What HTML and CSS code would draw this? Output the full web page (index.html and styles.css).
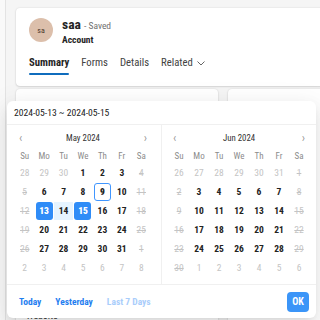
FILE: index.html
```html
<!DOCTYPE html>
<html lang="en">
<head>
  <meta charset="UTF-8">
  <meta name="viewport" content="width=device-width, initial-scale=1.0">
  <title>Account - saa</title>
  <link rel="stylesheet" href="styles.css">
</head>
<body>
  <div class="shell">
    <div class="rail"></div>
    <div class="main">
      <div class="header card">
        <div class="identity">
          <div class="avatar">sa</div>
          <div class="names">
            <div class="title">saa <span class="saved">- Saved</span></div>
            <div class="entity">Account</div>
          </div>
        </div>
        <div class="tabs">
          <span class="tab active">Summary</span>
          <span class="tab">Forms</span>
          <span class="tab">Details</span>
          <span class="tab">Related
            <svg class="chev" width="8" height="5" viewBox="0 0 8 5"><path d="M0.5 0.5l3.5 3.5 3.5-3.5" fill="none" stroke="#666" stroke-width="1"/></svg>
          </span>
        </div>
      </div>

      <div class="sections">
        <div class="card section">
          <div class="field">Website</div>
        </div>
        <div class="card section"></div>
      </div>
    </div>
  </div>

  <!-- date range popup -->
  <div class="picker">
    <div class="range-input">2024-05-13 ~ 2024-05-15</div>

    <div class="panels">
      <div class="panel">
        <div class="panel-head">
          <span class="arrow">&lsaquo;</span>
          <span class="month">May 2024</span>
          <span class="arrow">&rsaquo;</span>
        </div>
        <div class="grid">
          <span class="wd">Su</span><span class="wd">Mo</span><span class="wd">Tu</span><span class="wd">We</span><span class="wd">Th</span><span class="wd">Fr</span><span class="wd">Sa</span>

          <span class="d off">28</span><span class="d off">29</span><span class="d off">30</span><span class="d">1</span><span class="d">2</span><span class="d">3</span><span class="d dis">4</span>
          <span class="d dis">5</span><span class="d">6</span><span class="d">7</span><span class="d">8</span><span class="d"><b class="today">9</b></span><span class="d">10</span><span class="d dis">11</span>
          <span class="d dis">12</span><span class="d"><b class="sel">13</b></span><span class="d in">14</span><span class="d"><b class="sel">15</b></span><span class="d">16</span><span class="d">17</span><span class="d dis">18</span>
          <span class="d dis">19</span><span class="d">20</span><span class="d">21</span><span class="d">22</span><span class="d">23</span><span class="d">24</span><span class="d dis">25</span>
          <span class="d dis">26</span><span class="d">27</span><span class="d">28</span><span class="d">29</span><span class="d">30</span><span class="d">31</span><span class="d dis">1</span>
          <span class="d off">2</span><span class="d off">3</span><span class="d off">4</span><span class="d off">5</span><span class="d off">6</span><span class="d off">7</span><span class="d off">8</span>
        </div>
      </div>

      <div class="panel">
        <div class="panel-head">
          <span class="arrow">&lsaquo;</span>
          <span class="month">Jun 2024</span>
          <span class="arrow">&rsaquo;</span>
        </div>
        <div class="grid">
          <span class="wd">Su</span><span class="wd">Mo</span><span class="wd">Tu</span><span class="wd">We</span><span class="wd">Th</span><span class="wd">Fr</span><span class="wd">Sa</span>

          <span class="d off">26</span><span class="d off">27</span><span class="d off">28</span><span class="d off">29</span><span class="d off">30</span><span class="d off">31</span><span class="d dis">1</span>
          <span class="d dis">2</span><span class="d">3</span><span class="d">4</span><span class="d">5</span><span class="d">6</span><span class="d">7</span><span class="d dis">8</span>
          <span class="d dis">9</span><span class="d">10</span><span class="d">11</span><span class="d">12</span><span class="d">13</span><span class="d">14</span><span class="d dis">15</span>
          <span class="d dis">16</span><span class="d">17</span><span class="d">18</span><span class="d">19</span><span class="d">20</span><span class="d">21</span><span class="d dis">22</span>
          <span class="d dis">23</span><span class="d">24</span><span class="d">25</span><span class="d">26</span><span class="d">27</span><span class="d">28</span><span class="d dis">29</span>
          <span class="d dis">30</span><span class="d off">1</span><span class="d off">2</span><span class="d off">3</span><span class="d off">4</span><span class="d off">5</span><span class="d off">6</span>
        </div>
      </div>
    </div>

    <div class="footer">
      <span class="preset">Today</span>
      <span class="preset">Yesterday</span>
      <span class="preset muted">Last 7 Days</span>
      <button class="ok">OK</button>
    </div>
  </div>
</body>
</html>
```

FILE: styles.css
```css
* {
  box-sizing: border-box;
}
body {
  margin: 0;
  width: 320px;
  height: 320px;
  overflow: hidden;
  background-color: #f5f5f5;
  font-family: "Liberation Sans Narrow", "Roboto Condensed", "Noto Sans", sans-serif;
  color: #242424;
}
.shell {
  display: flex;
  height: 320px;
}
.rail {
  width: 6px;
  flex: none;
  background-color: #f9f9f9;
  border-right: 1px solid #e3e3e3;
}
.main {
  flex: 1;
  padding: 8px 0 0 10px;
  min-width: 0;
}
.card {
  background-color: #fff;
  border-radius: 4px;
  box-shadow: 0 0 2px rgba(0, 0, 0, 0.12), 0 1px 2px rgba(0, 0, 0, 0.1);
}
.header {
  height: 78px;
  margin-right: -10px;
  padding: 10px 0 0 13px;
}
.identity {
  display: flex;
  align-items: flex-start;
  gap: 9px;
}
.avatar {
  width: 24px;
  height: 24px;
  border-radius: 50%;
  background-color: #dcbfab;
  color: #4b372b;
  font-size: 8px;
  display: flex;
  align-items: center;
  justify-content: center;
}
.names {
  margin-top: -1px;
}
.title {
  font-size: 13.5px;
  line-height: 15px;
  font-weight: 700;
}
.saved {
  font-size: 9.5px;
  font-weight: 400;
  color: #707070;
}
.entity {
  font-size: 9.5px;
  line-height: 14px;
  font-weight: 700;
}
.tabs {
  display: flex;
  gap: 12px;
  margin-top: 9px;
  font-size: 10.7px;
  line-height: 14px;
  color: #424242;
}
.tab {
  position: relative;
  padding-bottom: 5px;
}
.tab.active {
  color: #242424;
  font-weight: 700;
}
.tab.active::after {
  content: "";
  position: absolute;
  left: 0;
  right: 0;
  bottom: 0;
  height: 2px;
  border-radius: 1px;
  background-color: #0f6cbd;
}
.chev {
  margin-left: 2px;
  vertical-align: middle;
}
.sections {
  display: flex;
  gap: 10px;
  margin-top: 3px;
}
.section {
  height: 240px;
  width: 202px;
  flex: none;
  padding: 221px 0 0 10px;
}
.field {
  font-size: 10px;
  color: #424242;
}

/* range picker popup */
.picker {
  position: absolute;
  left: 7px;
  top: 101px;
  width: 309px;
  height: 217px;
  background-color: #fff;
  border-radius: 6px;
  box-shadow: 0 6px 16px rgba(0, 0, 0, 0.08), 0 3px 6px -4px rgba(0, 0, 0, 0.12), 0 9px 28px 8px rgba(0, 0, 0, 0.05);
  display: flex;
  flex-direction: column;
}
.range-input {
  height: 24px;
  padding-left: 7px;
  font-size: 9.6px;
  line-height: 24px;
  color: #222;
  border-bottom: 1px solid #f0f0f0;
}
.panels {
  display: flex;
  border-bottom: 1px solid #f0f0f0;
}
.panel {
  width: 155px;
  padding: 2px 10px 7px 8px;
  border-right: 1px solid #f0f0f0;
}
.panel + .panel {
  width: 154px;
  padding: 2px 7px 7px 7px;
  border-right: none;
}
.panel-head {
  height: 22px;
  display: flex;
  align-items: center;
  justify-content: space-between;
  padding: 0 4px;
  font-size: 8.8px;
  color: #333;
}
.arrow {
  font-size: 12px;
  color: #999;
  line-height: 1;
}
.grid {
  display: grid;
  grid-template-columns: repeat(7, 1fr);
  grid-template-rows: 14px repeat(6, 19px);
  font-size: 9.5px;
  text-align: center;
}
.wd {
  color: #8c8c8c;
  font-size: 9px;
  line-height: 14px;
}
.d {
  line-height: 19px;
  font-weight: 700;
  color: #222;
  display: flex;
  align-items: center;
  justify-content: center;
}
.d.off,
.d.dis {
  font-weight: 400;
  color: #c4c4c4;
}
.d.dis {
  text-decoration: line-through;
}
.d.in {
  background-color: #e6f4ff;
  height: 18px;
  align-self: center;
}
.d b {
  width: 17px;
  height: 18px;
  line-height: 18px;
  border-radius: 3px;
}
.today {
  border: 1px solid #4096ff;
  line-height: 16px !important;
}
.sel {
  background-color: #2f8cf7;
  color: #fff;
}
.footer {
  flex: 1;
  display: flex;
  align-items: center;
  gap: 14px;
  padding: 0 7px 0 12px;
}
.preset {
  font-size: 9.5px;
  font-weight: 700;
  color: #1f7ef0;
}
.preset.muted {
  color: #a9cdfb;
}
.ok {
  margin-left: auto;
  width: 22px;
  height: 20px;
  padding: 0;
  border: none;
  border-radius: 4px;
  background-color: #3b95f8;
  color: #fff;
  font-family: inherit;
  font-size: 10px;
  font-weight: 700;
}
```
